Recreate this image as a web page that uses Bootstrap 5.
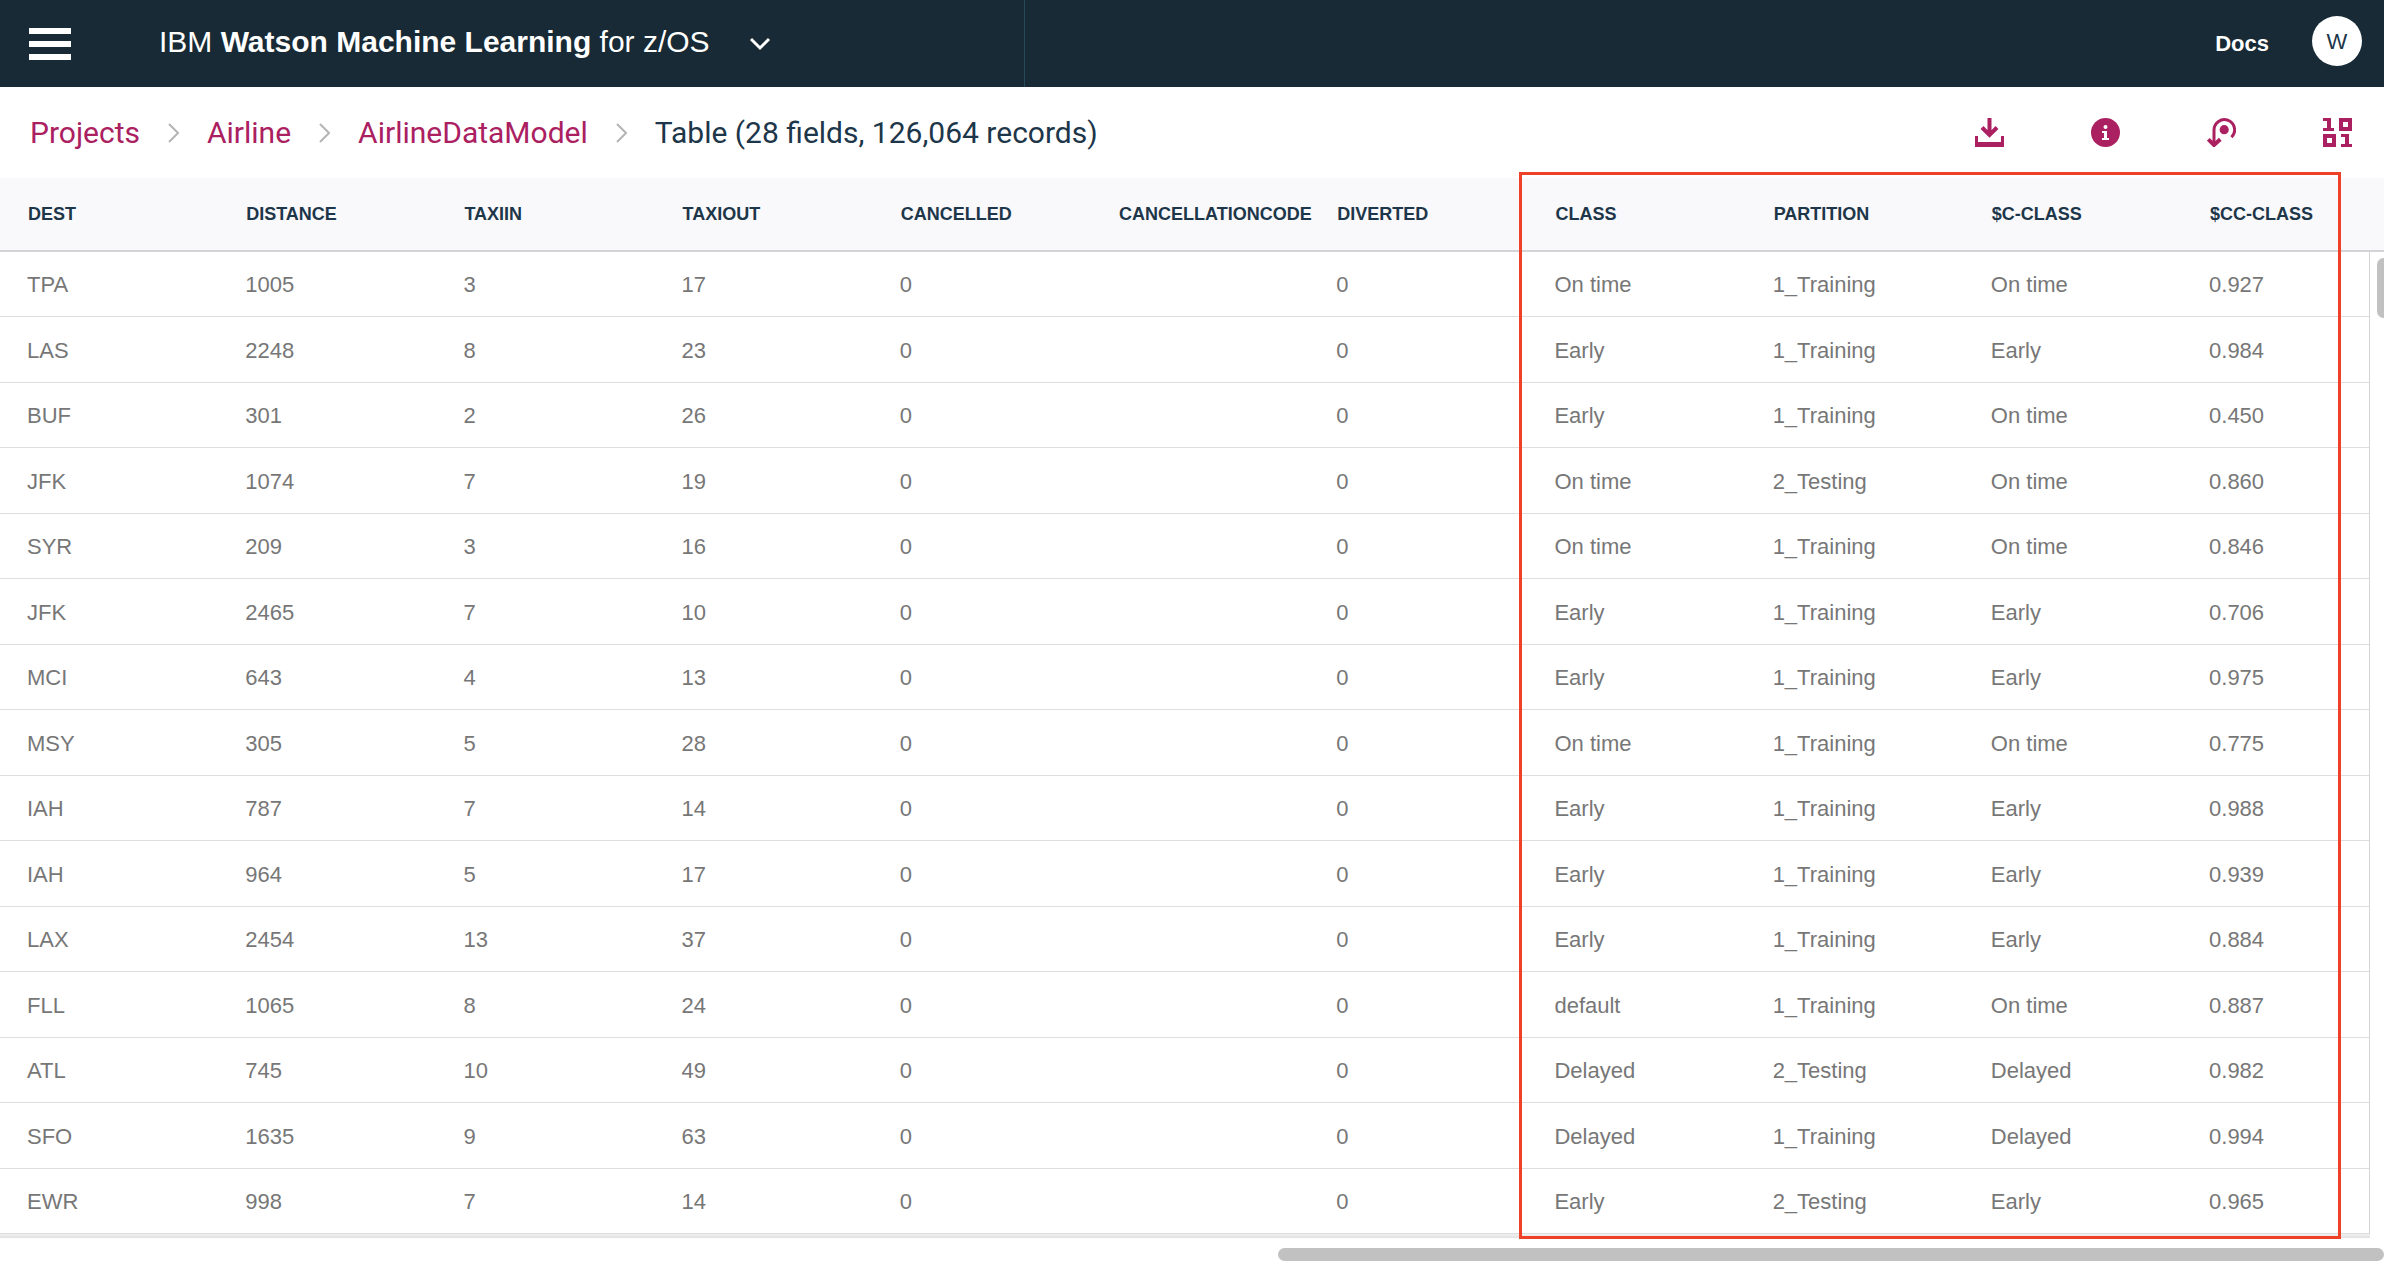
<!DOCTYPE html>
<html lang="en">
<head>
<meta charset="utf-8">
<meta name="viewport" content="width=device-width, initial-scale=1">
<title>AirlineDataModel - Table</title>
<link href="https://cdn.jsdelivr.net/npm/bootstrap@5.3.0/dist/css/bootstrap.min.css" rel="stylesheet">
<style>
  body { font-family: "Liberation Sans", Arial, sans-serif; background: #fff; overflow: hidden; }
  .topbar { background: #172a35; height: 87px; }
  .topbar-brand { width: 43%; border-right: 1px solid #264a5c; padding-left: 29px; }
  .menu-btn { width: 42px; margin-right: 88px; }
  .product { font-size: 30px; line-height: 36px; padding-bottom: 4px; }
  .product-caret { margin-left: 39px; padding-bottom: 3px; }
  .account { gap: 43px; padding-right: 22px; }
  .docs-link { font-size: 22px; line-height: 28px; }
  .avatar { width: 50px; height: 50px; font-size: 22px; color: #1d3649; margin-bottom: 5px; }
  .crumb-bar { height: 91px; padding: 0 32px 0 30px; }
  .crumbs { font-family: Roboto, "Liberation Sans", sans-serif; font-size: 30px; line-height: 36px; gap: 28px; color: #1d3649; }
  .crumbs a, .tool-btn { color: #aa2061; }
  .tools { gap: 87px; }
  .grid-table { table-layout: fixed; border-collapse: separate; border-spacing: 0; }
  .grid-table th, .grid-table td { padding: 0 0 0 27px; vertical-align: middle; white-space: nowrap; }
  .grid-table th { height: 74px; font-size: 18px; line-height: 24px; color: #1d3649; background: #f9f9fb; border-bottom: 2px solid #d4d4d6; padding-left: 28px; }
  .grid-table td { height: 65px; font-size: 22px; line-height: 28px; color: #777; border-bottom: 1px solid #dedede; padding-top: 2px; }
  .grid-table tr:nth-child(even) td { height: 66px; }
  .grid-table td.gutter { padding: 0; border-left: 1px solid #d4d4d6; border-bottom: 0; }
  .col-field { width: 9.153%; }
  .col-gutter { width: 15px; }
  .thumb-y { top: 6px; right: -6px; width: 13px; height: 60px; background: #c1c1c1; border-radius: 7px; }
  .grid-foot { height: 4px; margin-right: 14px; background: linear-gradient(#f0f0f0, #e2e2e2); }
  .thumb-x { width: 46.4%; height: 13px; margin-top: 10px; background: #c1c1c1; border-radius: 7px; }
  .highlight { top: -6px; bottom: -5px; left: calc(64.071% - 8px); right: 43px; border: 3px solid #ee4128; pointer-events: none; }
</style>
</head>
<body>
<header class="topbar d-flex align-items-stretch text-white">
  <div class="topbar-brand d-flex align-items-center">
    <button type="button" class="menu-btn btn p-0 border-0 d-flex" aria-label="Menu">
      <svg width="42" height="34" viewBox="0 0 42 34" fill="#fff"><path d="M0 1h42v6H0zM0 14h42v6H0zM0 27h42v6H0z"/></svg>
    </button>
    <span class="product text-nowrap">IBM <b>Watson Machine Learning</b> for z/OS</span>
    <button type="button" class="product-caret btn p-0 border-0 d-flex" aria-label="Switch product">
      <svg width="22" height="14" viewBox="0 0 22 14" fill="none" stroke="#fff" stroke-width="3"><path d="M2 2l9 9 9-9"/></svg>
    </button>
  </div>
  <div class="account d-flex align-items-center ms-auto">
    <a href="#" class="docs-link fw-bold text-white text-decoration-none">Docs</a>
    <button type="button" class="avatar btn bg-white rounded-circle p-0 border-0">W</button>
  </div>
</header>

<div class="crumb-bar d-flex align-items-center justify-content-between">
  <nav class="crumbs d-flex align-items-center text-nowrap" aria-label="Breadcrumb">
    <a href="#" class="text-decoration-none">Projects</a>
    <svg width="11" height="20" viewBox="0 0 11 20" fill="none" stroke="#b5b5b5" stroke-width="2"><path d="M1 1l9 9-9 9"/></svg>
    <a href="#" class="text-decoration-none">Airline</a>
    <svg width="11" height="20" viewBox="0 0 11 20" fill="none" stroke="#b5b5b5" stroke-width="2"><path d="M1 1l9 9-9 9"/></svg>
    <a href="#" class="text-decoration-none">AirlineDataModel</a>
    <svg width="11" height="20" viewBox="0 0 11 20" fill="none" stroke="#b5b5b5" stroke-width="2"><path d="M1 1l9 9-9 9"/></svg>
    <span>Table (28 fields, 126,064 records)</span>
  </nav>
  <div class="tools d-flex align-items-center">
    <button type="button" class="tool-btn btn p-0 border-0 d-flex" aria-label="Download">
      <svg width="29" height="29" viewBox="0 0 29 29" fill="currentColor"><path d="M0 18h3v6h23v-6h3v11H0z"/><path d="M14.500 0v17M7 9.500l7.500 7.500 7.500-7.500" fill="none" stroke="currentColor" stroke-width="4"/></svg>
    </button>
    <button type="button" class="tool-btn btn p-0 border-0 d-flex" aria-label="Information">
      <svg width="29" height="29" viewBox="0 0 29 29"><circle cx="14.500" cy="14.500" r="14.500" fill="currentColor"/><g fill="#fff"><circle cx="14.500" cy="9" r="2"/><path d="M11 13h5v7h2v2h-7v-2h2v-5h-2z"/></g></svg>
    </button>
    <button type="button" class="tool-btn btn p-0 border-0 d-flex" aria-label="Revert">
      <svg width="29" height="29" viewBox="0 0 29 29" fill="none" stroke="currentColor" stroke-width="3"><path d="M7 26V12a10.300 10.300 0 1 1 17.500 7.300"/><path d="M1.300 21.300L7 27l6.300-5.700" stroke-width="4"/><circle cx="17.200" cy="11.700" r="4.600" fill="currentColor" stroke="none"/></svg>
    </button>
    <button type="button" class="tool-btn btn p-0 border-0 d-flex" aria-label="Data format">
      <svg width="29" height="29" viewBox="0 0 29 29" fill="currentColor" fill-rule="evenodd"><path d="M0 0h8v10h3v3H0v-3h4V3H0zM16 0h13v13H16zM20 4v5h5V4zM0 16h13v13H0zM4 20v5h5v-5zM18 16h8v10h3v3H18v-3h4v-7h-4z"/></svg>
    </button>
  </div>
</div>

<main class="position-relative">
  <table class="grid-table w-100">
    <colgroup>
      <col class="col-field"><col class="col-field"><col class="col-field"><col class="col-field"><col class="col-field"><col class="col-field"><col class="col-field"><col class="col-field"><col class="col-field"><col class="col-field"><col><col class="col-gutter">
    </colgroup>
    <thead>
      <tr><th>DEST</th><th>DISTANCE</th><th>TAXIIN</th><th>TAXIOUT</th><th>CANCELLED</th><th>CANCELLATIONCODE</th><th>DIVERTED</th><th>CLASS</th><th>PARTITION</th><th>$C-CLASS</th><th>$CC-CLASS</th><th></th></tr>
    </thead>
    <tbody>
      <tr><td>TPA</td><td>1005</td><td>3</td><td>17</td><td>0</td><td></td><td>0</td><td>On time</td><td>1_Training</td><td>On time</td><td>0.927</td><td class="gutter position-relative" rowspan="15"><div class="thumb-y position-absolute"></div></td></tr>
      <tr><td>LAS</td><td>2248</td><td>8</td><td>23</td><td>0</td><td></td><td>0</td><td>Early</td><td>1_Training</td><td>Early</td><td>0.984</td></tr>
      <tr><td>BUF</td><td>301</td><td>2</td><td>26</td><td>0</td><td></td><td>0</td><td>Early</td><td>1_Training</td><td>On time</td><td>0.450</td></tr>
      <tr><td>JFK</td><td>1074</td><td>7</td><td>19</td><td>0</td><td></td><td>0</td><td>On time</td><td>2_Testing</td><td>On time</td><td>0.860</td></tr>
      <tr><td>SYR</td><td>209</td><td>3</td><td>16</td><td>0</td><td></td><td>0</td><td>On time</td><td>1_Training</td><td>On time</td><td>0.846</td></tr>
      <tr><td>JFK</td><td>2465</td><td>7</td><td>10</td><td>0</td><td></td><td>0</td><td>Early</td><td>1_Training</td><td>Early</td><td>0.706</td></tr>
      <tr><td>MCI</td><td>643</td><td>4</td><td>13</td><td>0</td><td></td><td>0</td><td>Early</td><td>1_Training</td><td>Early</td><td>0.975</td></tr>
      <tr><td>MSY</td><td>305</td><td>5</td><td>28</td><td>0</td><td></td><td>0</td><td>On time</td><td>1_Training</td><td>On time</td><td>0.775</td></tr>
      <tr><td>IAH</td><td>787</td><td>7</td><td>14</td><td>0</td><td></td><td>0</td><td>Early</td><td>1_Training</td><td>Early</td><td>0.988</td></tr>
      <tr><td>IAH</td><td>964</td><td>5</td><td>17</td><td>0</td><td></td><td>0</td><td>Early</td><td>1_Training</td><td>Early</td><td>0.939</td></tr>
      <tr><td>LAX</td><td>2454</td><td>13</td><td>37</td><td>0</td><td></td><td>0</td><td>Early</td><td>1_Training</td><td>Early</td><td>0.884</td></tr>
      <tr><td>FLL</td><td>1065</td><td>8</td><td>24</td><td>0</td><td></td><td>0</td><td>default</td><td>1_Training</td><td>On time</td><td>0.887</td></tr>
      <tr><td>ATL</td><td>745</td><td>10</td><td>49</td><td>0</td><td></td><td>0</td><td>Delayed</td><td>2_Testing</td><td>Delayed</td><td>0.982</td></tr>
      <tr><td>SFO</td><td>1635</td><td>9</td><td>63</td><td>0</td><td></td><td>0</td><td>Delayed</td><td>1_Training</td><td>Delayed</td><td>0.994</td></tr>
      <tr><td>EWR</td><td>998</td><td>7</td><td>14</td><td>0</td><td></td><td>0</td><td>Early</td><td>2_Testing</td><td>Early</td><td>0.965</td></tr>
    </tbody>
  </table>
  <div class="highlight position-absolute"></div>
</main>
<div class="grid-foot"></div>
<div class="thumb-x ms-auto"></div>
<script src="https://cdn.jsdelivr.net/npm/bootstrap@5.3.0/dist/js/bootstrap.bundle.min.js"></script>
</body>
</html>
